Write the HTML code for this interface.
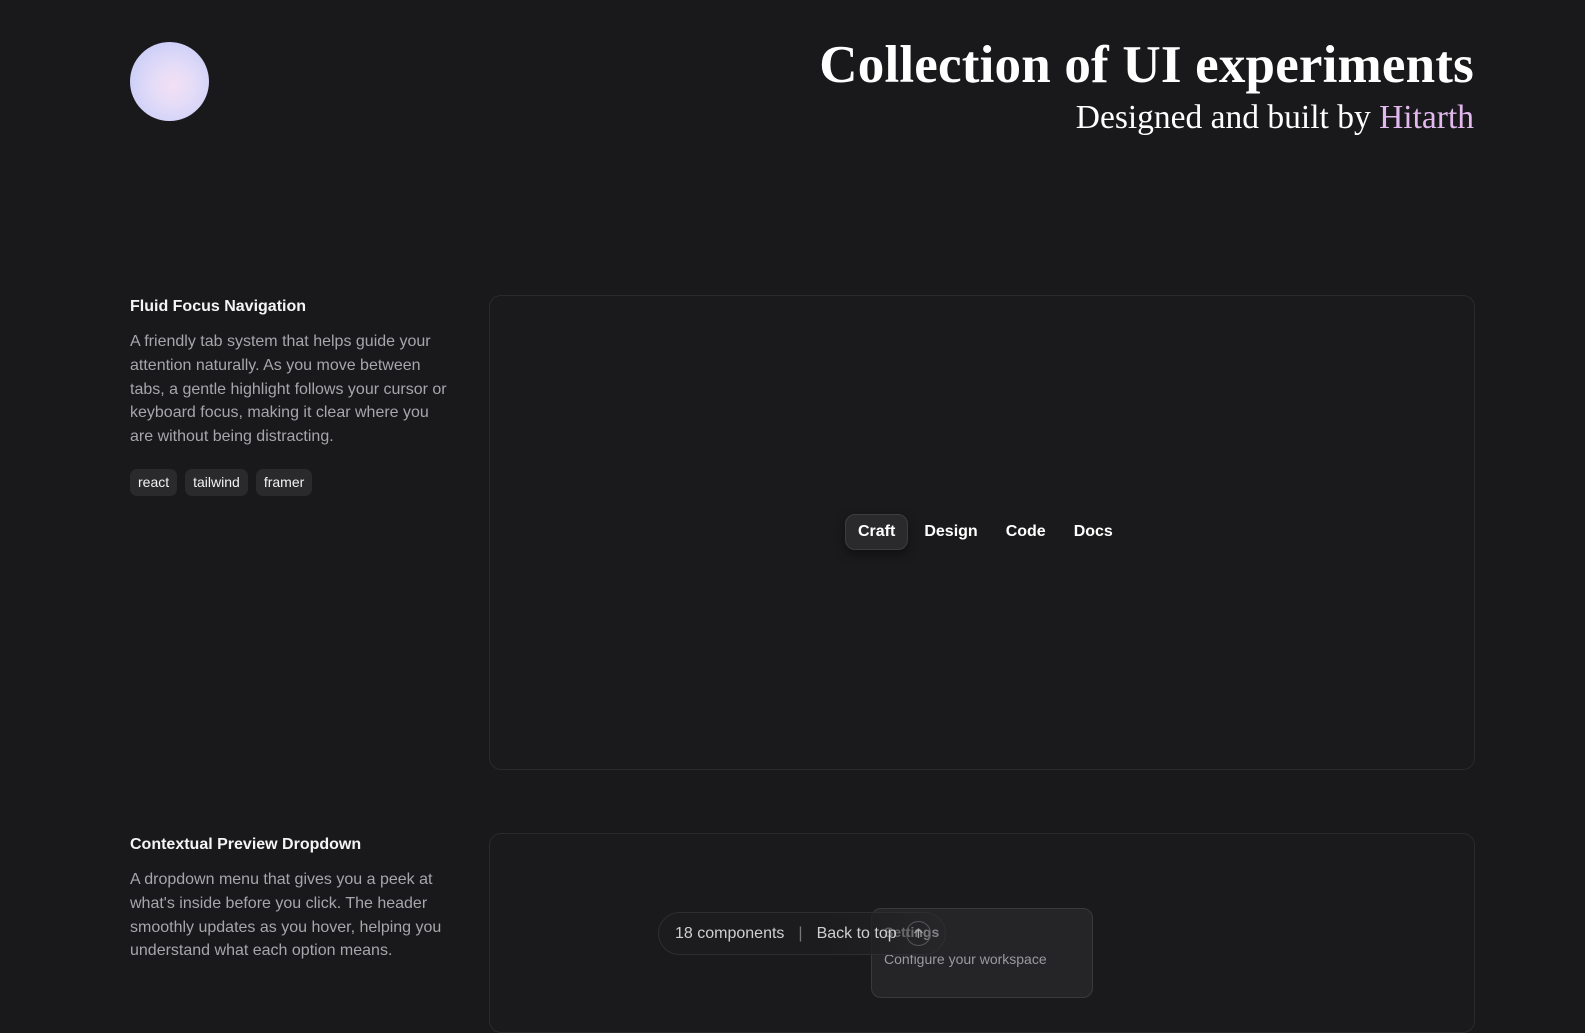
<!DOCTYPE html>
<html><head><meta charset="utf-8"><style>
*{margin:0;padding:0;box-sizing:border-box}
html,body{width:1585px;height:986px;overflow:hidden;background:#19191b;font-family:"Liberation Sans",sans-serif;color:#fff}
.orb{position:absolute;left:130px;top:42px;width:79px;height:79px;border-radius:50%;background:radial-gradient(circle at 55% 55%,#f3e0f4 0%,#e3dcf8 35%,#cfd0f8 70%,#b9c6f4 100%)}
.t1{position:absolute;right:111px;top:35px;font-family:"Liberation Serif",serif;font-weight:bold;font-size:53px;white-space:nowrap;letter-spacing:0.2px}
.t2{position:absolute;right:111px;top:99px;font-family:"Liberation Serif",serif;font-size:33.5px;white-space:nowrap}
.t2 span{color:#e2b8ef}
.sec h3{position:absolute;left:130px;font-size:16px;font-weight:bold;color:#f4f4f5}
.desc{position:absolute;left:130px;width:324px;font-size:16px;line-height:23.8px;color:#a6a6ab}
.tags{position:absolute;left:130px;top:469px;display:flex;gap:8px}
.tags span{background:#2a2a2d;border-radius:7px;padding:0 8px;height:27px;line-height:27px;font-size:14px;color:#f2f2f2}
.card{position:absolute;left:489px;width:986px;border:1px solid #2a2a2d;border-radius:12px;background:#1a1a1c}
.tabs{position:absolute;left:845px;top:514px;display:flex;align-items:center;font-size:16px;font-weight:bold}
.tabs span{height:36px;line-height:36px;padding:0 12px;border-radius:10px}
.tabs .a{background:#2a2a2d;border:1px solid #3d3d40;line-height:34px;box-shadow:0 4px 10px rgba(0,0,0,.4)}
.dd{position:absolute;left:871px;top:908px;width:222px;height:90px;border:1px solid #3a3a3d;border-radius:10px;background:#252528}
.dd b{position:absolute;left:12px;top:15px;font-size:14px}
.dd i{position:absolute;left:12px;top:42px;font-size:14px;font-style:normal;color:#9a9a9f}
.pill{position:absolute;left:658px;top:912px;width:288px;height:43px;border-radius:22px;border:1px solid #2e2e31;background:linear-gradient(90deg,rgba(28,28,30,.97) 55%,rgba(40,40,43,.55));display:flex;align-items:center;font-size:16px;color:#cfcfd2}
.ic{position:absolute;left:906px;top:921px;width:25px;height:25px;border:1px solid #55555a;border-radius:50%}
</style></head><body>
<div class="orb"></div>
<div class="t1">Collection of UI experiments</div>
<div class="t2">Designed and built by <span>Hitarth</span></div>

<div class="sec"><h3 style="top:298px">Fluid Focus Navigation</h3></div>
<div class="desc" style="top:330px">A friendly tab system that helps guide your attention naturally. As you move between tabs, a gentle highlight follows your cursor or keyboard focus, making it clear where you are without being distracting.</div>
<div class="tags"><span>react</span><span>tailwind</span><span>framer</span></div>
<div class="card" style="top:295px;height:475px"></div>
<div class="tabs"><span class="a">Craft</span><span style="margin-left:4px">Design</span><span style="margin-left:4px">Code</span><span style="margin-left:4px">Docs</span></div>

<div class="sec"><h3 style="top:836px">Contextual Preview Dropdown</h3></div>
<div class="desc" style="top:868px">A dropdown menu that gives you a peek at what's inside before you click. The header smoothly updates as you hover, helping you understand what each option means.</div>
<div class="card" style="top:833px;height:200px"></div>
<div class="dd"><b>Settings</b><i>Configure your workspace</i></div>
<div class="pill"><span style="margin-left:16px">18 components</span><span style="margin:0 14px;color:#777">|</span><span>Back to top</span></div>
<div class="ic"><svg width="23" height="23" viewBox="0 0 23 23"><path d="M11.5 16V7M7.5 11l4-4 4 4" stroke="#aaa" stroke-width="1.2" fill="none"/></svg></div>
</body></html>
